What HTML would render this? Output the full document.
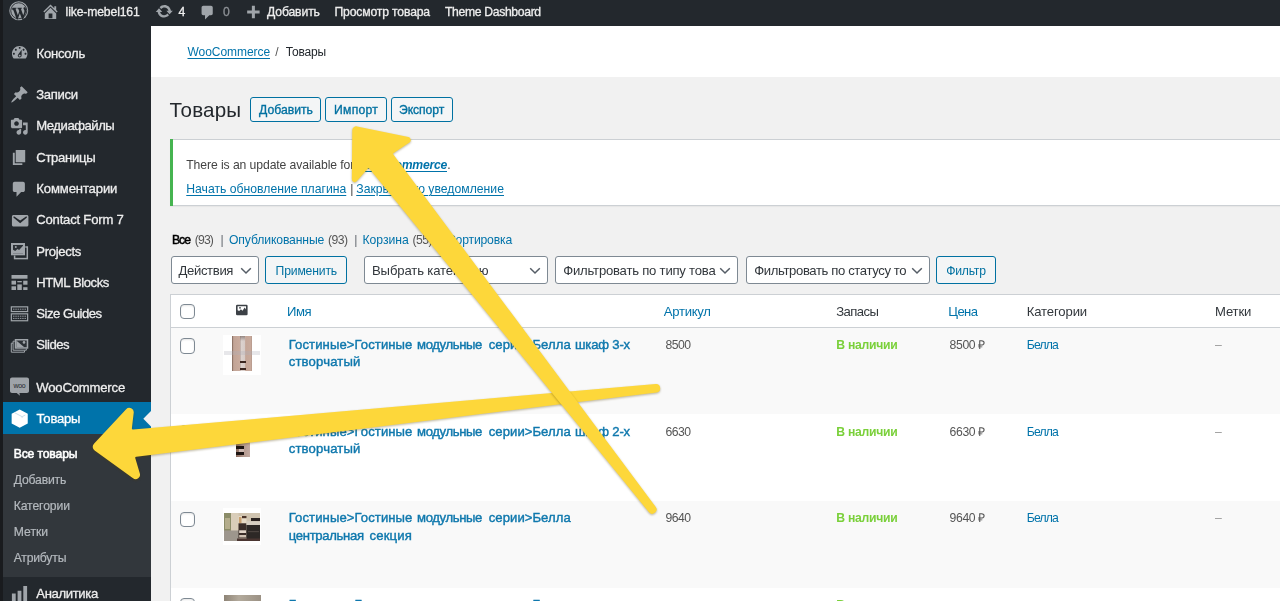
<!DOCTYPE html>
<html lang="ru"><head><meta charset="utf-8"><title>Товары</title>
<style>
html,body{margin:0;padding:0}
body{width:1280px;height:601px;overflow:hidden;position:relative;background:#f1f1f1;font-family:'Liberation Sans',sans-serif;}
.t{position:absolute;white-space:pre;text-underline-offset:1.5px;text-decoration-thickness:1px}
svg{position:absolute;overflow:visible}
#tx{position:absolute;left:0;top:0;width:1280px;height:601px;will-change:transform}
</style></head><body>
<div style="position:absolute;left:0px;top:0px;width:1280px;height:25.6px;background:#23282d;"></div>
<div style="position:absolute;left:0px;top:25.6px;width:150.6px;height:576px;background:#23282d;"></div>
<div style="position:absolute;left:0px;top:434px;width:150.6px;height:143px;background:#32373c;"></div>
<div style="position:absolute;left:0px;top:402.3px;width:150.6px;height:31.7px;background:#0073aa;"></div>
<div style="position:absolute;left:0px;top:0px;width:2.8px;height:601px;background:#191b1e;"></div>
<svg style="left:143px;top:410px" width="8" height="17" viewBox="0 0 8 17"><path d="M8 1 L0.300 8.700 L8 16.400z" fill="#f1f1f1"/></svg>
<div style="position:absolute;left:150.6px;top:25.6px;width:1130px;height:51.6px;background:#fff;"></div>
<div style="position:absolute;left:250.1px;top:97px;width:69.1px;height:22.900000000000006px;border:1px solid #0071a1;border-radius:3px;background:#f3f5f6;"></div>
<div style="position:absolute;left:325px;top:97px;width:59.5px;height:22.900000000000006px;border:1px solid #0071a1;border-radius:3px;background:#f3f5f6;"></div>
<div style="position:absolute;left:390.75px;top:97px;width:59.75px;height:22.900000000000006px;border:1px solid #0071a1;border-radius:3px;background:#f3f5f6;"></div>
<div style="position:absolute;left:169.6px;top:139.4px;width:1120px;height:64.6px;background:#fff;border-top:1px solid #ccd0d4;border-bottom:1px solid #ccd0d4;box-shadow:0 1px 1px rgba(0,0,0,.04);"></div>
<div style="position:absolute;left:169.6px;top:139.4px;width:3.6px;height:66.6px;background:#46b450;"></div>
<div style="position:absolute;left:170.6px;top:256.3px;width:86.29999999999998px;height:26.099999999999966px;border:1px solid #7e8993;border-radius:3px;background:#fff;"></div><svg style="left:239.10px;top:266.05px" width="14" height="10" viewBox="0 0 14 10"><path d="M2.200 2.300 L7 7 L11.800 2.300" fill="none" stroke="#555d66" stroke-width="1.500"/></svg>
<div style="position:absolute;left:265.2px;top:256.3px;width:79.80000000000001px;height:26.099999999999966px;border:1px solid #0071a1;border-radius:3px;background:#f3f5f6;"></div>
<div style="position:absolute;left:363.5px;top:256.3px;width:182.0px;height:26.099999999999966px;border:1px solid #7e8993;border-radius:3px;background:#fff;"></div><svg style="left:527.70px;top:266.05px" width="14" height="10" viewBox="0 0 14 10"><path d="M2.200 2.300 L7 7 L11.800 2.300" fill="none" stroke="#555d66" stroke-width="1.500"/></svg>
<div style="position:absolute;left:554.5px;top:256.3px;width:181.75px;height:26.099999999999966px;border:1px solid #7e8993;border-radius:3px;background:#fff;"></div><svg style="left:718.45px;top:266.05px" width="14" height="10" viewBox="0 0 14 10"><path d="M2.200 2.300 L7 7 L11.800 2.300" fill="none" stroke="#555d66" stroke-width="1.500"/></svg>
<div style="position:absolute;left:745.5px;top:256.3px;width:182.0px;height:26.099999999999966px;border:1px solid #7e8993;border-radius:3px;background:#fff;"></div><svg style="left:909.70px;top:266.05px" width="14" height="10" viewBox="0 0 14 10"><path d="M2.200 2.300 L7 7 L11.800 2.300" fill="none" stroke="#555d66" stroke-width="1.500"/></svg>
<div style="position:absolute;left:935.5px;top:256.3px;width:58.75px;height:26.099999999999966px;border:1px solid #0071a1;border-radius:3px;background:#f3f5f6;"></div>
<div style="position:absolute;left:169.5px;top:293.5px;width:1120px;height:320px;background:#fff;border:1px solid #ccd0d4;"></div>
<div style="position:absolute;left:170.5px;top:326.9px;width:1120px;height:1px;background:#ccd0d4;"></div>
<div style="position:absolute;left:170.5px;top:327.8px;width:1120px;height:86.6px;background:#f9f9f9;"></div>
<div style="position:absolute;left:170.5px;top:501.0px;width:1120px;height:86.6px;background:#f9f9f9;"></div>
<div style="position:absolute;left:180px;top:304px;width:13.4px;height:13.4px;border:1px solid #7e8993;border-radius:4px;background:#fff;box-shadow:inset 0 1px 2px rgba(0,0,0,.1);"></div>
<div style="position:absolute;left:180px;top:338.40000000000003px;width:13.4px;height:13.4px;border:1px solid #7e8993;border-radius:4px;background:#fff;box-shadow:inset 0 1px 2px rgba(0,0,0,.1);"></div>
<div style="position:absolute;left:180px;top:425.0px;width:13.4px;height:13.4px;border:1px solid #7e8993;border-radius:4px;background:#fff;box-shadow:inset 0 1px 2px rgba(0,0,0,.1);"></div>
<div style="position:absolute;left:180px;top:511.6px;width:13.4px;height:13.4px;border:1px solid #7e8993;border-radius:4px;background:#fff;box-shadow:inset 0 1px 2px rgba(0,0,0,.1);"></div>
<div style="position:absolute;left:180px;top:598.1999999999999px;width:13.4px;height:13.4px;border:1px solid #7e8993;border-radius:4px;background:#fff;box-shadow:inset 0 1px 2px rgba(0,0,0,.1);"></div>
<div style="position:absolute;left:223px;top:335px;width:38px;height:39.5px;background:#fff;"></div><div style="position:absolute;left:231.8px;top:336.2px;width:20.2px;height:35.3px;background:linear-gradient(90deg,#8f7568 0,#8f7568 4%,#c2a496 8%,#c9ab9d 38%,#b9a8a2 41%,#dcd2ce 46%,#d6cbc7 64%,#c4a698 68%,#c8aa9c 96%,#a58b7e 100%);"></div><div style="position:absolute;left:240.2px;top:336.2px;width:5.3px;height:5px;background:linear-gradient(180deg,rgba(120,105,100,.7),rgba(120,105,100,0));"></div><div style="position:absolute;left:224px;top:351.3px;width:36px;height:3.6px;background:rgba(176,176,186,.3);filter:blur(0.6px);"></div><div style="position:absolute;left:240.4px;top:360.8px;width:5.9px;height:2.4px;background:#3a2620;"></div><div style="position:absolute;left:240.4px;top:367.5px;width:5.9px;height:2.6px;background:#3a2620;"></div>
<div style="position:absolute;left:223px;top:421.5px;width:38px;height:38px;background:#fff;"></div>
<div style="position:absolute;left:235.6px;top:424.5px;width:14px;height:32.5px;background:linear-gradient(90deg,#8a6a5c 0,#b49a90 55%,#c3aaa2 100%);"></div>
<div style="position:absolute;left:236px;top:445.5px;width:7.5px;height:3px;background:#1d1412;"></div>
<div style="position:absolute;left:236px;top:452.0px;width:7.5px;height:3.4px;background:#1d1412;"></div>
<div style="position:absolute;left:239px;top:448.5px;width:4.5px;height:3.5px;background:#cdb9b2;"></div>
<div style="position:absolute;left:223px;top:508.4px;width:38px;height:37px;background:#fff;"></div><svg style="left:223.7px;top:512.7px;overflow:hidden" width="36.6" height="28.2" viewBox="0 0 36.600 28.200"><g style="filter:blur(0.45px)"><rect x="-1" y="-1" width="39" height="31" fill="#cfc3af"/><rect x="-1" y="-1" width="8" height="19" fill="#8b8c68"/><rect x="1" y="5" width="5" height="11" fill="#b4ad8c"/><rect x="7" y="-1" width="7.500" height="23" fill="#d9cdb9"/><rect x="-1" y="17.500" width="16" height="12" fill="#9d968d"/><rect x="14.500" y="3" width="8" height="7.500" fill="#e6dac6"/><rect x="18" y="3" width="4.500" height="2.200" fill="#4a342a"/><rect x="15" y="4" width="2.500" height="6" fill="#c9a070"/><rect x="14.500" y="10.300" width="8" height="15" fill="#3a2d29"/><rect x="15.200" y="17.300" width="6.800" height="2.700" fill="#e2d6ca"/><rect x="15.200" y="22" width="6.800" height="2.500" fill="#d0c2b4"/><rect x="27" y="5" width="10" height="3.200" fill="#2a2220"/><rect x="22.500" y="8.200" width="15" height="4" fill="#d6cec2"/><rect x="22.500" y="12" width="15" height="14" fill="#2d2826"/><rect x="24" y="18" width="11" height="1.200" fill="#4c4440"/><rect x="13" y="25.500" width="25" height="4" fill="#4a3531"/></g></svg>
<div style="position:absolute;left:223px;top:594.9px;width:38px;height:6px;background:#fff;"></div>
<div style="position:absolute;left:223.6px;top:595.1px;width:37px;height:6px;background:linear-gradient(90deg,#8e8476,#b3aa9c 40%,#9b9184);"></div>
<svg style="left:8.95px;top:1.35px" width="19.50" height="19.50" viewBox="0 0 20 20"><circle cx="10" cy="10" r="9.700" fill="#a0a5aa"/><circle cx="10" cy="10" r="8.200" fill="none" stroke="#23282d" stroke-width="0.900"/><path fill="#23282d" d="M3.200 7h4.500v.800l-1 .100 2.400 6.800 1.400-4.100-1-2.700-.900-.100V7h4.700v.800l-1.100.100 2.400 6.800.900-2.700c.500-1.500.300-2.400-.200-3.200-.500-.800-.600-1.500-.100-2.100.400-.500 1.100-.500 1.600-.200 1.200 2.400.900 5.200-.300 7.100l-2 5.400-.900.300-2.500-6.800-2.300 6.700-.900-.200-3.400-9.600-1-.100z"/></svg>
<svg style="left:41.20px;top:1.71px" width="19.00" height="19.00" viewBox="0 0 20 20"><path fill="#a0a5aa"  d="M16 8.5l1.53 1.53-1.06 1.06L10 4.62l-6.47 6.47-1.06-1.06L10 2.5l4 4v-2h2v4zm-6-2.46l6 5.99V18H4v-5.97zM12 17v-5H8v5h4z"/></svg>
<svg style="left:155.00px;top:2.30px" width="18.60" height="18.60" viewBox="0 0 20 20"><path fill="#a0a5aa"  d="M10.2 3.28c3.53 0 6.43 2.61 6.92 6h2.08l-3.5 4-3.5-4h2.32c-.45-1.97-2.21-3.45-4.32-3.45-1.45 0-2.73.71-3.54 1.78L4.95 5.66C6.23 4.2 8.11 3.28 10.2 3.28zm-.4 13.44c-3.52 0-6.43-2.61-6.92-6H.8l3.500-4c1.17 1.33 2.33 2.67 3.5 4H5.480c.45 1.97 2.21 3.45 4.32 3.45 1.45 0 2.73-.71 3.54-1.780l1.71 1.95c-1.280 1.46-3.15 2.38-5.25 2.38z"/></svg>
<svg style="left:199.10px;top:4.00px" width="17.20" height="17.20" viewBox="0 0 20 20"><path fill="#a0a5aa"  d="M5 2h9c1.1 0 2 .9 2 2v7c0 1.1-.9 2-2 2h-2l-5 5v-5H5c-1.1 0-2-.9-2-2V4c0-1.1.9-2 2-2z"/></svg>
<svg style="left:244.52px;top:3.64px" width="17.20" height="17.20" viewBox="0 0 20 20"><path fill="#a0a5aa"  d="M17 7.5v3.5h-5.5v5.500H8v-5.500H2.500V7.500H8V2h3.500v5.500H17z"/></svg>
<svg style="left:9.85px;top:42.89px" width="19.40" height="19.40" viewBox="0 0 20 20"><path fill="#a0a5aa"  d="M3.760 16h12.480c1.100-1.370 1.760-3.110 1.760-5 0-4.420-3.580-8-8-8s-8 3.580-8 8c0 1.890.660 3.630 1.760 5zM10 4c.550 0 1 .450 1 1s-.450 1-1 1-1-.450-1-1 .450-1 1-1zM6 6c.550 0 1 .450 1 1s-.450 1-1 1-1-.450-1-1 .450-1 1-1zm8 0c.550 0 1 .450 1 1s-.450 1-1 1-1-.450-1-1 .450-1 1-1zm-5.370 5.550L12 7v6c0 1.100-.900 2-2 2s-2-.900-2-2c0-.570.240-1.080.630-1.450zM4 10c.550 0 1 .450 1 1s-.450 1-1 1-1-.450-1-1 .450-1 1-1zm12 0c.550 0 1 .450 1 1s-.450 1-1 1-1-.450-1-1 .450-1 1-1zm-5 3c0-.550-.450-1-1-1s-1 .450-1 1 .450 1 1 1 1-.450 1-1z"/></svg>
<svg style="left:9.61px;top:85.19px" width="19.00" height="19.00" viewBox="0 0 20 20"><path fill="#a0a5aa"  d="M10.440 3.020l1.820-1.820 6.360 6.350-1.830 1.820c-1.050-.680-2.480-.570-3.410.360l-.750.750c-.920.930-1.040 2.350-.350 3.410l-1.830 1.820-2.410-2.410-2.800 2.790c-.420.420-3.380 2.710-3.800 2.290s1.860-3.390 2.280-3.810l2.790-2.790L4.100 9.360l1.830-1.820c1.050.690 2.480.570 3.400-.360l.750-.750c.930-.920 1.050-2.350.360-3.410z"/></svg>
<svg style="left:10.10px;top:116.60px" width="18.60" height="18.60" viewBox="0 0 20 20"><path fill="#a0a5aa"  d="M13 11V4c0-.550-.450-1-1-1h-1.670L9 1H5L3.670 3H2c-.550 0-1 .450-1 1v7c0 .550.450 1 1 1h10c.550 0 1-.450 1-1zM7 4.500c1.380 0 2.500 1.120 2.500 2.500S8.380 9.500 7 9.500 4.500 8.380 4.500 7 5.620 4.500 7 4.500zM14 6h5v10.500c0 1.380-1.120 2.500-2.500 2.500S14 17.880 14 16.500s1.120-2.500 2.500-2.500c.170 0 .340.020.500.050V9h-3V6zm-4 8.050V13h2v3.500c0 1.380-1.120 2.500-2.500 2.500S7 17.880 7 16.500 8.120 14 9.500 14c.170 0 .340.020.500.050z"/></svg>
<svg style="left:10.37px;top:147.70px" width="19.00" height="19.00" viewBox="0 0 20 20"><path fill="#a0a5aa"  d="M6 15V2h10v13H6zm-1 1h8v2H3V5h2v11z"/></svg>
<svg style="left:9.86px;top:179.70px" width="18.60" height="18.60" viewBox="0 0 20 20"><path fill="#a0a5aa"  d="M5 2h9c1.1 0 2 .9 2 2v7c0 1.1-.9 2-2 2h-2l-5 5v-5H5c-1.1 0-2-.9-2-2V4c0-1.1.9-2 2-2z"/></svg>
<svg style="left:10.01px;top:210.60px" width="19.40" height="19.40" viewBox="0 0 20 20"><path fill="#a0a5aa"  d="M3.870 4h13.250C18.370 4 19 4.590 19 5.790v8.420c0 1.190-.630 1.790-1.880 1.790H3.870c-1.250 0-1.880-.600-1.880-1.790V5.790c0-1.200.630-1.790 1.880-1.790zm6.620 8.600l6.740-5.530c.240-.200.430-.660.130-1.070-.290-.410-.820-.420-1.170-.170l-5.700 3.860L4.800 5.830c-.350-.250-.880-.240-1.170.170-.300.410-.110.870.130 1.070z"/></svg>
<svg style="left:0;top:0" width="160" height="601" viewBox="0 0 160 601"><rect x="14.600" y="247" width="12.700" height="11.600" fill="none" stroke="#a0a5aa" stroke-width="1.500"/><rect x="10.700" y="242.700" width="14.600" height="12.800" fill="#23282d"/><rect x="11" y="243" width="14" height="12.300" fill="#a0a5aa"/><rect x="13" y="245" width="10" height="8.300" fill="#2c3136"/><path fill="#a0a5aa" d="M13 253.300v-3.600l2.200 1.200 2.300-2 1.600 1.200 3.900-4.300v7.500z"/><circle cx="15.800" cy="246.900" r="1" fill="#a0a5aa"/></svg>
<svg style="left:0;top:0" width="160" height="601" viewBox="0 0 160 601"><g fill="#a0a5aa"><rect x="11.500" y="275" width="16" height="3.700"/><rect x="11.500" y="280.700" width="4.500" height="3.900"/><rect x="17.300" y="281" width="4.500" height="1.300"/><rect x="23.200" y="280.700" width="4.300" height="4"/><rect x="11.500" y="286.300" width="4.500" height="3.700"/><rect x="17.300" y="284.400" width="4.500" height="5.600"/><rect x="23.200" y="287.200" width="4.300" height="2.800"/></g></svg>
<svg style="left:0;top:0" width="160" height="601" viewBox="0 0 160 601"><g fill="none" stroke="#a0a5aa" stroke-width="1.200"><rect x="11.350" y="306.850" width="16.300" height="4.700"/><rect x="11.350" y="313.850" width="16.300" height="6.900"/></g><g stroke="#a0a5aa" stroke-width="0.900" stroke-dasharray="1.500 0.800"><path d="M13 309.200h13M13 316.200h13M13 318.400h13"/></g></svg>
<svg style="left:0;top:0" width="160" height="601" viewBox="0 0 160 601"><g fill="none" stroke="#a0a5aa" stroke-width="1"><path d="M13 343.200h-1.700v9h13.200v-1.600"/><path d="M14.800 341.200h-1.700v9h13.200v-1.600"/></g><rect x="14.750" y="339" width="13.500" height="9.700" fill="#a0a5aa"/><rect x="16.300" y="340.500" width="10.400" height="6.700" fill="#2c3136"/><path fill="#a0a5aa" d="M16.300 340.500l8 6.700h-8z"/><circle cx="24" cy="342.400" r="1.300" fill="#a0a5aa"/></svg>
<svg style="left:0;top:0" width="160" height="601" viewBox="0 0 160 601"><path fill="#9ea3a8" d="M12 377.500h15c1.100 0 2 .900 2 2v11.500c0 1.100-.900 2-2 2h-7.600l.600 2.700-3.300-2.700H12c-1.100 0-2-.900-2-2V379.500c0-1.100.900-2 2-2z"/><text x="19.500" y="387.700" font-family="Liberation Sans, sans-serif" font-size="7" text-anchor="middle" fill="#23282d" letter-spacing="-0.300">woo</text></svg>
<svg style="left:9.80px;top:408.80px" width="19.40" height="19.40" viewBox="0 0 20 20"><path fill="#ffffff" d="M10 0.600l8.300 4.200v10.200L10 19.400 1.700 15V4.800z"/><path fill="none" stroke="#c3d9e6" stroke-width="0.900" d="M4.300 3.600l8.200 4.300 3.300-1.700M12.500 7.900l0 1.200"/></svg>
<svg style="left:10.00px;top:584.00px" width="19.00" height="19.00" viewBox="0 0 20 20"><path fill="#a0a5aa"  d="M18 18V2h-4v16h4zm-6 0V7H8v11h4zm-6 0v-8H2v8h4z"/></svg>
<svg style="left:0;top:0" width="400" height="601" viewBox="0 0 400 601"><rect x="236" y="304.700" width="11.600" height="10.600" rx="1.200" fill="#3c4146"/><path fill="#fff" d="M237.600 306.300h8.400v3.200l-1.300-2-2.200 3.200-1.600-1.400-1.700 1.800-1.600-.9z"/><circle cx="240" cy="307.800" r="0.900" fill="#3c4146"/></svg>
<div id="tx"><span class="t" style="left:65.60px;top:3px;font-size:12.2px;line-height:18px;color:#eeeeee;letter-spacing:-0.144px;-webkit-text-stroke:0.3px;">like-mebel161</span>
<span class="t" style="left:178.60px;top:3px;font-size:12.2px;line-height:18px;color:#eeeeee;letter-spacing:-0.181px;-webkit-text-stroke:0.3px;">4</span>
<span class="t" style="left:223.00px;top:3px;font-size:12.2px;line-height:18px;color:#8d9196;letter-spacing:-0.381px;-webkit-text-stroke:0.3px;">0</span>
<span class="t" style="left:267.00px;top:3px;font-size:12.2px;line-height:18px;color:#eeeeee;letter-spacing:-0.134px;-webkit-text-stroke:0.3px;">Добавить</span>
<span class="t" style="left:334.50px;top:3px;font-size:12.2px;line-height:18px;color:#eeeeee;letter-spacing:-0.164px;-webkit-text-stroke:0.3px;">Просмотр товара</span>
<span class="t" style="left:445.00px;top:3px;font-size:12.2px;line-height:18px;color:#eeeeee;letter-spacing:-0.344px;-webkit-text-stroke:0.3px;">Theme Dashboard</span>
<span class="t" style="left:187.50px;top:43px;font-size:12.0px;line-height:18px;color:#0073aa;letter-spacing:-0.058px;text-decoration:underline;">WooCommerce</span>
<span class="t" style="left:275.20px;top:43px;font-size:12.0px;line-height:18px;color:#555;letter-spacing:1.256px;">/</span>
<span class="t" style="left:285.70px;top:43px;font-size:12.0px;line-height:18px;color:#23282d;letter-spacing:-0.164px;">Товары</span>
<span class="t" style="left:36.50px;top:45px;font-size:13.1px;line-height:18px;color:#eeeeee;letter-spacing:-0.242px;-webkit-text-stroke:0.3px;">Консоль</span>
<span class="t" style="left:36.25px;top:86px;font-size:13.1px;line-height:18px;color:#eeeeee;letter-spacing:-0.320px;-webkit-text-stroke:0.3px;">Записи</span>
<span class="t" style="left:36.25px;top:117px;font-size:13.1px;line-height:18px;color:#eeeeee;letter-spacing:-0.467px;-webkit-text-stroke:0.3px;">Медиафайлы</span>
<span class="t" style="left:36.25px;top:149px;font-size:13.1px;line-height:18px;color:#eeeeee;letter-spacing:-0.292px;-webkit-text-stroke:0.3px;">Страницы</span>
<span class="t" style="left:36.25px;top:180px;font-size:13.1px;line-height:18px;color:#eeeeee;letter-spacing:-0.130px;-webkit-text-stroke:0.3px;">Комментарии</span>
<span class="t" style="left:36.25px;top:211px;font-size:13.1px;line-height:18px;color:#eeeeee;letter-spacing:-0.206px;-webkit-text-stroke:0.3px;">Contact Form 7</span>
<span class="t" style="left:36.25px;top:243px;font-size:13.1px;line-height:18px;color:#eeeeee;letter-spacing:-0.308px;-webkit-text-stroke:0.3px;">Projects</span>
<span class="t" style="left:36.25px;top:274px;font-size:13.1px;line-height:18px;color:#eeeeee;letter-spacing:-0.420px;-webkit-text-stroke:0.3px;">HTML Blocks</span>
<span class="t" style="left:36.25px;top:305px;font-size:13.1px;line-height:18px;color:#eeeeee;letter-spacing:-0.478px;-webkit-text-stroke:0.3px;">Size Guides</span>
<span class="t" style="left:36.25px;top:336px;font-size:13.1px;line-height:18px;color:#eeeeee;letter-spacing:-0.470px;-webkit-text-stroke:0.3px;">Slides</span>
<span class="t" style="left:36.25px;top:379px;font-size:13.1px;line-height:18px;color:#eeeeee;letter-spacing:-0.179px;-webkit-text-stroke:0.3px;">WooCommerce</span>
<span class="t" style="left:36.60px;top:410px;font-size:13.1px;line-height:18px;color:#ffffff;letter-spacing:-0.224px;-webkit-text-stroke:0.3px;">Товары</span>
<span class="t" style="left:36.25px;top:585px;font-size:13.1px;line-height:18px;color:#eeeeee;letter-spacing:-0.351px;-webkit-text-stroke:0.3px;">Аналитика</span>
<span class="t" style="left:13.70px;top:445px;font-size:12.2px;line-height:18px;color:#ffffff;letter-spacing:-0.157px;-webkit-text-stroke:0.55px;">Все товары</span>
<span class="t" style="left:13.70px;top:471px;font-size:12.2px;line-height:18px;color:#b4b9be;letter-spacing:-0.172px;-webkit-text-stroke:0.2px;">Добавить</span>
<span class="t" style="left:13.70px;top:497px;font-size:12.2px;line-height:18px;color:#b4b9be;letter-spacing:-0.110px;-webkit-text-stroke:0.2px;">Категории</span>
<span class="t" style="left:13.70px;top:523px;font-size:12.2px;line-height:18px;color:#b4b9be;letter-spacing:0.022px;-webkit-text-stroke:0.2px;">Метки</span>
<span class="t" style="left:13.70px;top:549px;font-size:12.2px;line-height:18px;color:#b4b9be;letter-spacing:-0.211px;-webkit-text-stroke:0.2px;">Атрибуты</span>
<span class="t" style="left:169.50px;top:95px;font-size:20.6px;line-height:30px;color:#23282d;letter-spacing:0.143px;">Товары</span>
<span class="t" style="left:259.00px;top:101px;font-size:12.2px;line-height:18px;color:#0071a1;letter-spacing:0.016px;-webkit-text-stroke:0.35px;">Добавить</span>
<span class="t" style="left:334.10px;top:101px;font-size:12.2px;line-height:18px;color:#0071a1;letter-spacing:0.232px;-webkit-text-stroke:0.35px;">Импорт</span>
<span class="t" style="left:399.00px;top:101px;font-size:12.2px;line-height:18px;color:#0071a1;letter-spacing:-0.078px;-webkit-text-stroke:0.35px;">Экспорт</span>
<span class="t" style="left:186.25px;top:156px;font-size:12.2px;line-height:18px;color:#444;letter-spacing:-0.087px;">There is an update available for:</span>
<span class="t" style="left:360.50px;top:156px;font-size:12.2px;line-height:18px;color:#0073aa;letter-spacing:-0.243px;font-weight:700;font-style:italic;text-decoration:underline;">WooCommerce</span>
<span class="t" style="left:447.20px;top:156px;font-size:12.2px;line-height:18px;color:#444;letter-spacing:-0.591px;">.</span>
<span class="t" style="left:186.25px;top:180px;font-size:12.2px;line-height:18px;color:#0073aa;letter-spacing:0.008px;text-decoration:underline;">Начать обновление плагина</span>
<span class="t" style="left:350.20px;top:180px;font-size:12.2px;line-height:18px;color:#444;letter-spacing:-1.172px;">|</span>
<span class="t" style="left:356.25px;top:180px;font-size:12.2px;line-height:18px;color:#0073aa;letter-spacing:0.019px;text-decoration:underline;">Закрыть это уведомление</span>
<span class="t" style="left:171.90px;top:231px;font-size:12.2px;line-height:18px;color:#000;letter-spacing:-0.972px;-webkit-text-stroke:0.5px;">Все</span>
<span class="t" style="left:194.75px;top:231px;font-size:12.2px;line-height:18px;color:#555;letter-spacing:-0.834px;">(93)</span>
<span class="t" style="left:220.40px;top:231px;font-size:12.2px;line-height:18px;color:#646970;letter-spacing:-1.172px;">|</span>
<span class="t" style="left:229.00px;top:231px;font-size:12.2px;line-height:18px;color:#0073aa;letter-spacing:-0.127px;">Опубликованные</span>
<span class="t" style="left:328.00px;top:231px;font-size:12.2px;line-height:18px;color:#555;letter-spacing:-0.547px;">(93)</span>
<span class="t" style="left:354.30px;top:231px;font-size:12.2px;line-height:18px;color:#646970;letter-spacing:-1.172px;">|</span>
<span class="t" style="left:362.50px;top:231px;font-size:12.2px;line-height:18px;color:#0073aa;letter-spacing:-0.027px;">Корзина</span>
<span class="t" style="left:412.50px;top:231px;font-size:12.2px;line-height:18px;color:#555;letter-spacing:-0.547px;">(55)</span>
<span class="t" style="left:438.50px;top:231px;font-size:12.2px;line-height:18px;color:#646970;letter-spacing:-1.172px;">|</span>
<span class="t" style="left:447.00px;top:231px;font-size:12.2px;line-height:18px;color:#0073aa;letter-spacing:-0.189px;">Сортировка</span>
<span class="t" style="left:178.50px;top:262px;font-size:13.1px;line-height:18px;color:#32373c;letter-spacing:-0.347px;">Действия</span>
<span class="t" style="left:275.60px;top:262px;font-size:12.2px;line-height:18px;color:#0071a1;letter-spacing:-0.176px;">Применить</span>
<span class="t" style="left:372.00px;top:262px;font-size:13.1px;line-height:18px;color:#32373c;letter-spacing:-0.131px;">Выбрать категорию</span>
<span class="t" style="left:563.25px;top:262px;font-size:13.1px;line-height:18px;color:#32373c;letter-spacing:-0.213px;">Фильтровать по типу това</span>
<span class="t" style="left:754.25px;top:262px;font-size:13.1px;line-height:18px;color:#32373c;letter-spacing:-0.374px;">Фильтровать по статусу то</span>
<span class="t" style="left:946.25px;top:262px;font-size:12.2px;line-height:18px;color:#0071a1;letter-spacing:-0.242px;">Фильтр</span>
<span class="t" style="left:287.00px;top:303px;font-size:13.1px;line-height:18px;color:#0073aa;letter-spacing:-0.422px;">Имя</span>
<span class="t" style="left:663.75px;top:303px;font-size:13.1px;line-height:18px;color:#0073aa;letter-spacing:-0.261px;">Артикул</span>
<span class="t" style="left:836.25px;top:303px;font-size:13.1px;line-height:18px;color:#32373c;letter-spacing:-0.589px;">Запасы</span>
<span class="t" style="left:948.25px;top:303px;font-size:13.1px;line-height:18px;color:#0073aa;letter-spacing:-0.559px;">Цена</span>
<span class="t" style="left:1026.75px;top:303px;font-size:13.1px;line-height:18px;color:#32373c;letter-spacing:-0.132px;">Категории</span>
<span class="t" style="left:1215.00px;top:303px;font-size:13.1px;line-height:18px;color:#32373c;letter-spacing:-0.141px;">Метки</span>
<span class="t" style="left:288.75px;top:336px;font-size:13.1px;line-height:18px;color:#0f78ad;letter-spacing:0.090px;-webkit-text-stroke:0.42px;">Гостиные&gt;Гостиные</span>
<span class="t" style="left:417.00px;top:336px;font-size:13.1px;line-height:18px;color:#0f78ad;letter-spacing:-0.366px;-webkit-text-stroke:0.42px;">модульные</span>
<span class="t" style="left:488.75px;top:336px;font-size:13.1px;line-height:18px;color:#0f78ad;letter-spacing:0.055px;-webkit-text-stroke:0.42px;">серии&gt;Белла</span>
<span class="t" style="left:575.00px;top:336px;font-size:13.1px;line-height:18px;color:#0f78ad;letter-spacing:-0.176px;-webkit-text-stroke:0.42px;">шкаф 3-х</span>
<span class="t" style="left:288.75px;top:353px;font-size:13.1px;line-height:18px;color:#0f78ad;letter-spacing:0.158px;-webkit-text-stroke:0.42px;">створчатый</span>
<span class="t" style="left:836.25px;top:336px;font-size:12.2px;line-height:18px;color:#7ad03a;letter-spacing:-0.264px;font-weight:700;">В наличии</span>
<span class="t" style="left:665.50px;top:336px;font-size:12.2px;line-height:18px;color:#555;letter-spacing:-0.531px;">8500</span>
<span class="t" style="left:949.50px;top:336px;font-size:12.2px;line-height:18px;color:#555;letter-spacing:-0.333px;">8500 ₽</span>
<span class="t" style="left:1026.75px;top:336px;font-size:12.2px;line-height:18px;color:#0073aa;letter-spacing:-0.825px;">Белла</span>
<span class="t" style="left:1215.00px;top:336px;font-size:12.2px;line-height:18px;color:#999;letter-spacing:-1.181px;">–</span>
<span class="t" style="left:288.75px;top:423px;font-size:13.1px;line-height:18px;color:#0f78ad;letter-spacing:0.090px;-webkit-text-stroke:0.42px;">Гостиные&gt;Гостиные</span>
<span class="t" style="left:417.00px;top:423px;font-size:13.1px;line-height:18px;color:#0f78ad;letter-spacing:-0.366px;-webkit-text-stroke:0.42px;">модульные</span>
<span class="t" style="left:488.75px;top:423px;font-size:13.1px;line-height:18px;color:#0f78ad;letter-spacing:0.055px;-webkit-text-stroke:0.42px;">серии&gt;Белла</span>
<span class="t" style="left:575.00px;top:423px;font-size:13.1px;line-height:18px;color:#0f78ad;letter-spacing:-0.176px;-webkit-text-stroke:0.42px;">шкаф 2-х</span>
<span class="t" style="left:288.75px;top:440px;font-size:13.1px;line-height:18px;color:#0f78ad;letter-spacing:0.158px;-webkit-text-stroke:0.42px;">створчатый</span>
<span class="t" style="left:836.25px;top:423px;font-size:12.2px;line-height:18px;color:#7ad03a;letter-spacing:-0.264px;font-weight:700;">В наличии</span>
<span class="t" style="left:665.50px;top:423px;font-size:12.2px;line-height:18px;color:#555;letter-spacing:-0.531px;">6630</span>
<span class="t" style="left:949.50px;top:423px;font-size:12.2px;line-height:18px;color:#555;letter-spacing:-0.333px;">6630 ₽</span>
<span class="t" style="left:1026.75px;top:423px;font-size:12.2px;line-height:18px;color:#0073aa;letter-spacing:-0.825px;">Белла</span>
<span class="t" style="left:1215.00px;top:423px;font-size:12.2px;line-height:18px;color:#999;letter-spacing:-1.181px;">–</span>
<span class="t" style="left:288.75px;top:509px;font-size:13.1px;line-height:18px;color:#0f78ad;letter-spacing:0.090px;-webkit-text-stroke:0.42px;">Гостиные&gt;Гостиные</span>
<span class="t" style="left:417.00px;top:509px;font-size:13.1px;line-height:18px;color:#0f78ad;letter-spacing:-0.366px;-webkit-text-stroke:0.42px;">модульные</span>
<span class="t" style="left:488.75px;top:509px;font-size:13.1px;line-height:18px;color:#0f78ad;letter-spacing:0.055px;-webkit-text-stroke:0.42px;">серии&gt;Белла</span>
<span class="t" style="left:288.75px;top:527px;font-size:13.1px;line-height:18px;color:#0f78ad;letter-spacing:-0.318px;-webkit-text-stroke:0.42px;">центральная</span>
<span class="t" style="left:369.50px;top:527px;font-size:13.1px;line-height:18px;color:#0f78ad;letter-spacing:0.172px;-webkit-text-stroke:0.42px;">секция</span>
<span class="t" style="left:836.25px;top:509px;font-size:12.2px;line-height:18px;color:#7ad03a;letter-spacing:-0.264px;font-weight:700;">В наличии</span>
<span class="t" style="left:665.50px;top:509px;font-size:12.2px;line-height:18px;color:#555;letter-spacing:-0.531px;">9640</span>
<span class="t" style="left:949.50px;top:509px;font-size:12.2px;line-height:18px;color:#555;letter-spacing:-0.333px;">9640 ₽</span>
<span class="t" style="left:1026.75px;top:509px;font-size:12.2px;line-height:18px;color:#0073aa;letter-spacing:-0.825px;">Белла</span>
<span class="t" style="left:1215.00px;top:509px;font-size:12.2px;line-height:18px;color:#999;letter-spacing:-1.181px;">–</span>
<span class="t" style="left:288.75px;top:596px;font-size:13.1px;line-height:18px;color:#0f78ad;letter-spacing:0.090px;-webkit-text-stroke:0.42px;">Гостиные&gt;Гостиные</span>
<span class="t" style="left:417.00px;top:596px;font-size:13.1px;line-height:18px;color:#0f78ad;letter-spacing:-0.366px;-webkit-text-stroke:0.42px;">модульные</span>
<span class="t" style="left:488.75px;top:596px;font-size:13.1px;line-height:18px;color:#0f78ad;letter-spacing:0.055px;-webkit-text-stroke:0.42px;">серии&gt;Белла</span>
<span class="t" style="left:288.75px;top:613px;font-size:13.1px;line-height:18px;color:#0f78ad;letter-spacing:-0.318px;-webkit-text-stroke:0.42px;">центральная</span>
<span class="t" style="left:369.50px;top:613px;font-size:13.1px;line-height:18px;color:#0f78ad;letter-spacing:0.172px;-webkit-text-stroke:0.42px;">секция</span>
<span class="t" style="left:836.25px;top:596px;font-size:12.2px;line-height:18px;color:#7ad03a;letter-spacing:-0.264px;font-weight:700;">В наличии</span></div>
<svg style="left:0;top:0" width="1280" height="601" viewBox="0 0 1280 601"><g style="filter:drop-shadow(0.6px 1.4px 1.1px rgba(80,60,0,.38))"><path d="M94.63 450.56A4.60 4.60 0 0 1 93.97 443.69L126.13 409.30A4.40 4.40 0 0 1 133.71 412.83L131.87 428.23A1.20 1.20 0 0 0 133.17 429.57L655.75 383.94A4.00 4.00 0 0 1 660.08 387.55L660.13 388.02A4.00 4.00 0 0 1 656.64 392.38L136.30 456.63A1.20 1.20 0 0 0 135.30 458.16L139.84 473.53A4.40 4.40 0 0 1 133.05 478.34Z" fill="#fdd73a"/></g><g style="filter:drop-shadow(0.6px 1.4px 1.1px rgba(80,60,0,.38))"><path d="M352.26 130.28A4.00 4.00 0 0 1 357.08 126.40L408.41 137.12A3.00 3.00 0 0 1 409.44 142.57L393.67 152.90A1.20 1.20 0 0 0 393.36 154.62L655.76 506.92A4.20 4.20 0 0 1 654.99 512.73L654.85 512.84A4.20 4.20 0 0 1 648.99 512.19L369.50 168.71A1.20 1.20 0 0 0 367.66 168.69L356.96 181.11A2.90 2.90 0 0 1 351.86 179.19Z" fill="#fdd73a"/></g></svg>
</body></html>
